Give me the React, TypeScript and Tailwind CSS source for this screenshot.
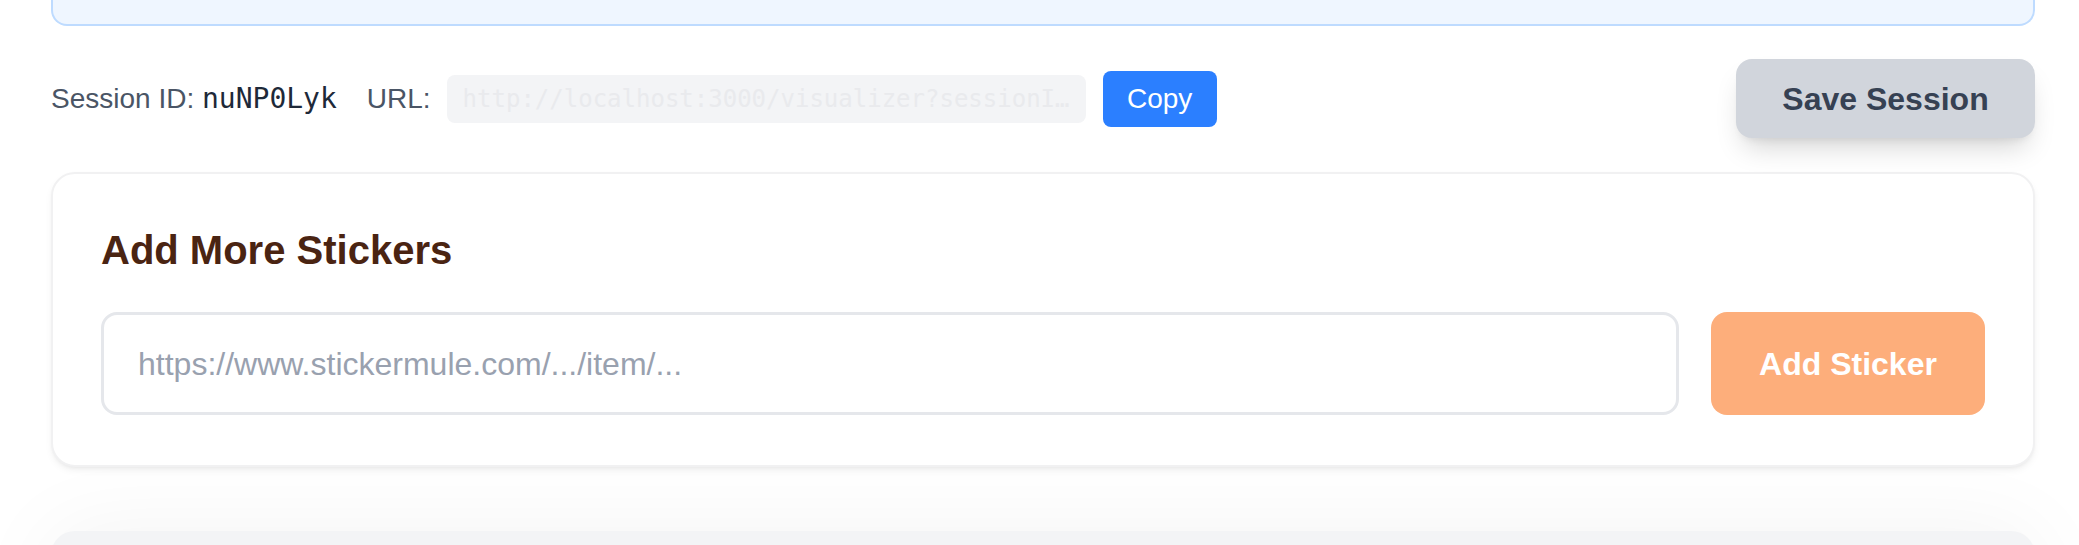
import { useState } from 'react'

const sans = 'font-["Liberation_Sans",Arial,sans-serif]'
const mono = 'font-["DejaVu_Sans_Mono","Liberation_Mono",monospace]'

export default function App() {
  const sessionId = 'nuNP0Lyk'
  const url = `http://localhost:3000/visualizer?sessionId=${sessionId}`
  const [stickerUrl, setStickerUrl] = useState('')

  return (
    <div className={`w-[2079px] h-[545px] overflow-hidden bg-white ${sans}`}>
      <div className="ml-[51px] w-[1984px]">
        {/* info banner (bottom edge only) */}
        <div className="h-[26px] bg-[#eff6ff] border-2 border-t-0 border-[#bedbff] rounded-b-[16px]" />

        {/* session bar */}
        <div className="mt-[33px] h-[79px] flex items-center justify-between">
          <div className="flex items-center text-[28px] leading-[40px]">
            <span className="text-[#4a5565]">
              Session ID: <span className={`${mono} text-[#1e2939]`}>{sessionId}</span>
            </span>
            <span className="ml-[30px] text-[#4a5565]">URL:</span>
            <div
              className={`ml-[16px] w-[639px] h-[48px] rounded-[8px] bg-[#f3f4f6] px-[16px] ${mono} text-[24px] leading-[48px] text-[#e9eaed] truncate`}
            >
              {url}
            </div>
            <button className="ml-[17px] w-[114px] h-[56px] rounded-[8px] bg-[#2b7fff] text-white text-[28px]">
              Copy
            </button>
          </div>
          <button className="w-[299px] h-[79px] rounded-[16px] bg-[#d1d5dc] text-[#364153] text-[32px] font-bold shadow-[0_16px_28px_-8px_rgba(0,0,0,0.18),0_6px_10px_-6px_rgba(0,0,0,0.1)]">
            Save Session
          </button>
        </div>

        {/* add stickers card */}
        <div className="mt-[34px] border-2 border-[#f1f1f2] rounded-[24px] bg-white px-[48px] pt-[48px] pb-[50px] shadow-[0_4px_8px_-2px_rgba(0,0,0,0.08),0_2px_4px_-2px_rgba(0,0,0,0.06)]">
          <h2 className="h-[56px] text-[40px] leading-[56px] font-bold text-[#4a2412]">Add More Stickers</h2>
          <div className="mt-[34px] flex gap-[32px] h-[103px]">
            <input
              value={stickerUrl}
              onChange={(e) => setStickerUrl(e.target.value)}
              placeholder="https://www.stickermule.com/.../item/..."
              className={`flex-1 min-w-0 border-[3px] border-[#e5e7eb] rounded-[16px] px-[34px] text-[32px] text-[#1e2939] placeholder:text-[#99a1af] outline-none ${sans}`}
            />
            <button className="w-[274px] rounded-[16px] bg-[#fdae7b] text-white text-[32px] font-bold">
              Add Sticker
            </button>
          </div>
        </div>

        {/* next panel */}
        <div className="mt-[64px] h-[120px] rounded-t-[24px] bg-[#f3f4f6] shadow-[0_0_90px_rgba(0,0,0,0.05)]" />
      </div>
    </div>
  )
}
